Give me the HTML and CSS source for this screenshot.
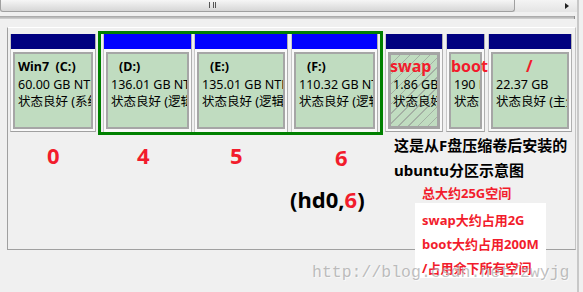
FILE: index.html
```html
<!DOCTYPE html>
<html lang="zh-CN">
<head>
  <meta charset="UTF-8" />
  <title>ubuntu 分区示意图</title>
  <link rel="stylesheet" href="styles.css">
</head>
<body>

  <div class="window">
    <div class="hscroll">
      <div class="thumb"><span class="grip"></span></div>
      <span class="arrow"></span>
    </div>
    <div class="ledge"></div>

    <div class="panel">
      <div class="disk">
        <div class="part w-c">
          <div class="bar"></div>
          <div class="cell">
            <div class="name">Win7&nbsp;&nbsp;(C:)</div>
            <div class="line">60.00 GB NTFS</div>
            <div class="line">状态良好 (系统, 启动, 页面文件)</div>
          </div>
        </div>

        <!-- extended partition, selected -->
        <div class="selected">
          <div class="part w-d">
            <div class="bar logical"></div>
            <div class="cell">
              <div class="name indent">(D:)</div>
              <div class="line">136.01 GB NTFS</div>
              <div class="line">状态良好 (逻辑驱动器)</div>
            </div>
          </div>
          <div class="part w-e">
            <div class="bar logical"></div>
            <div class="cell">
              <div class="name indent">(E:)</div>
              <div class="line">135.01 GB NTFS</div>
              <div class="line">状态良好 (逻辑驱动器)</div>
            </div>
          </div>
          <div class="part w-f">
            <div class="bar logical"></div>
            <div class="cell">
              <div class="name indent">(F:)</div>
              <div class="line">110.32 GB NTFS</div>
              <div class="line">状态良好 (逻辑驱动器)</div>
            </div>
          </div>
        </div>

        <div class="part w-swap">
          <div class="bar"></div>
          <div class="cell hatched">
            <div class="tag">swap</div>
            <div class="line">1.86 GB</div>
            <div class="line">状态良好 (主分区)</div>
          </div>
        </div>
        <div class="part w-boot">
          <div class="bar"></div>
          <div class="cell">
            <div class="tag">boot</div>
            <div class="line">190 MB</div>
            <div class="line">状态良好 (主分区)</div>
          </div>
        </div>
        <div class="part w-root">
          <div class="bar"></div>
          <div class="cell">
            <div class="tag root-tag">/</div>
            <div class="line">22.37 GB</div>
            <div class="line">状态良好 (主分区)</div>
          </div>
        </div>
      </div>

      <div class="lower">
        <div class="left">
          <div class="nums">
            <span>0</span>
            <span>4</span>
            <span>5</span>
            <span class="six">6</span>
          </div>
          <div class="hd">(hd0,<span class="red">6</span>)</div>
        </div>

        <div class="note">
          <p class="dark">这是从F盘压缩卷后安装的</p>
          <p class="dark">ubuntu分区示意图</p>
          <p class="total">总大约25G空间</p>
          <div class="box">
            <p>swap大约占用2G</p>
            <p>boot大约占用200M</p>
            <p>/占用余下所有空间</p>
          </div>
        </div>
      </div>

      <div class="watermark">http://blog.csdn.net/zwyjg</div>
    </div>
  </div>

</body>
</html>
```

FILE: styles.css
```css
* { box-sizing: border-box; }
body {
  margin: 0;
  background: #f0f0f0;
  font-family: 'Noto Sans', 'Noto Sans CJK SC', sans-serif;
  color: #000;
  overflow: hidden;
}

p { margin: 0; }

.window {
  width: 579px;
  height: 292px;
  border-right: 2px solid #c8c8c8;
}

/* scrollbar strip at the top */
.hscroll {
  display: flex;
  height: 12px;
  background: linear-gradient(#f4f4f4, #e4e4e4);
}

.thumb {
  width: 515px;
  height: 12px;
  border: 1px solid #a0a0a0;
  border-top: none;
  border-radius: 0 0 3px 3px;
  background: linear-gradient(#f6f6f6, #d6d6d6);
  display: flex;
  justify-content: center;
  padding-right: 90px;
  padding-top: 2px;
}

.grip {
  width: 7px;
  height: 6px;
  border-left: 1px solid #555;
  border-right: 1px solid #555;
  background: linear-gradient(90deg, transparent 3px, #555 3px, #555 4px, transparent 4px);
}

.arrow {
  margin: 3px 0 0 50px;
  width: 0;
  height: 0;
  border-top: 3px solid transparent;
  border-bottom: 3px solid transparent;
  border-left: 4px solid #222;
}

.ledge {
  width: 575px;
  height: 3px;
  margin-top: 4px;
  background: linear-gradient(#a4a4a4, #d4d4d4);
  border-right: 1px solid #8c8c8c;
}

/* graphical disk view */
.panel {
  position: relative;
  width: 569px;
  height: 223px;
  margin: 8px 0 0 7px;
  padding: 3px 0 0 2px;
  border-left: 1px solid #a0a0a0;
  border-top: 1px solid #fff;
  border-right: 1px solid #c4c4c4;
  border-bottom: 1px solid #a0a0a0;
}

.disk {
  display: flex;
  align-items: flex-start;
}

.part {
  flex: none;
  height: 98px;
  margin-top: 3px;
  margin-left: 2px;
  background: #f9f9f9;
  border-left: 1px solid #c8c8c8;
  border-right: 1px solid #b0b0b0;
  border-bottom: 1px solid #a0a0a0;
}

.w-c { width: 86px; margin-left: 0; }
.w-d { width: 89px; }
.w-e { width: 94px; }
.w-f { width: 87px; margin-left: 3px; }
.w-swap { width: 58px; }
.w-boot { width: 39px; margin-left: 3px; }
.w-root { width: 84px; margin-left: 3px; }

.selected {
  display: flex;
  margin-left: 2px;
  padding: 0 2px;
  border: 3px solid #008000;
}

.selected .part { margin-top: 0; border-bottom: none; }
.selected .w-d { margin-left: 0; }

.bar {
  height: 15px;
  background: #000080;
}

.bar.logical { background: #0000ff; }

.cell {
  height: 77px;
  margin: 3px 2px 0;
  padding: 4px 0 0 3px;
  background: #c0dcc0;
  border: 2px solid #a6a6a6;
  font-size: 12.5px;
  line-height: 17.5px;
}

.line {
  white-space: nowrap;
  overflow: hidden;
}

.name {
  font-weight: bold;
  white-space: nowrap;
  overflow: hidden;
}

.name.indent { padding-left: 8px; }

.hatched {
  border: 3px solid #a4a4a4;
  padding: 3px 0 0 2px;
  background: repeating-linear-gradient(135deg, #c0dcc0 0, #c0dcc0 6px, #a4b0a4 6px, #a4b0a4 7px);
}

.tag {
  margin-left: -3px;
  color: #f21c2c;
  font-weight: bold;
  font-size: 16px;
  line-height: 17.5px;
  white-space: nowrap;
  position: relative;
  z-index: 1;
}

.root-tag { padding-left: 33px; }

/* notes under the disk */
.lower {
  display: flex;
}

.left {
  width: 384px;
  flex: none;
}

.nums {
  display: grid;
  grid-template-columns: 90px 93px 105px 14px;
  margin-top: 7px;
  padding-left: 37px;
  color: #f21c2c;
  font-weight: bold;
  font-size: 22px;
  line-height: 26px;
}

.nums .six { position: relative; top: 2px; }

.hd {
  margin-top: 18px;
  padding-left: 280px;
  font-weight: bold;
  font-size: 22px;
  line-height: 26px;
}

.red { color: #f21c2c; }

.note {
  margin-top: -2px;
}

.note .dark {
  font-weight: bold;
  font-size: 15px;
  line-height: 25px;
  white-space: nowrap;
}

.total {
  margin-top: 1px;
  padding-left: 28px;
  color: #f21c2c;
  font-weight: bold;
  font-size: 13px;
  line-height: 18px;
}

.box {
  position: relative;
  width: 131px;
  height: 75px;
  margin: 1px 0 0 21px;
  padding: 5px 0 0 7px;
  background: #fff;
}

.box p {
  color: #f21c2c;
  font-weight: bold;
  font-size: 13px;
  line-height: 24px;
  white-space: nowrap;
}

.watermark {
  position: absolute;
  left: 304px;
  top: 235px;
  font-family: 'Liberation Mono', monospace;
  font-size: 16.5px;
  line-height: 20px;
  color: rgba(150, 150, 150, 0.6);
  text-shadow: 1px 1px 0 rgba(255, 255, 255, 0.6);
  white-space: nowrap;
}
```
